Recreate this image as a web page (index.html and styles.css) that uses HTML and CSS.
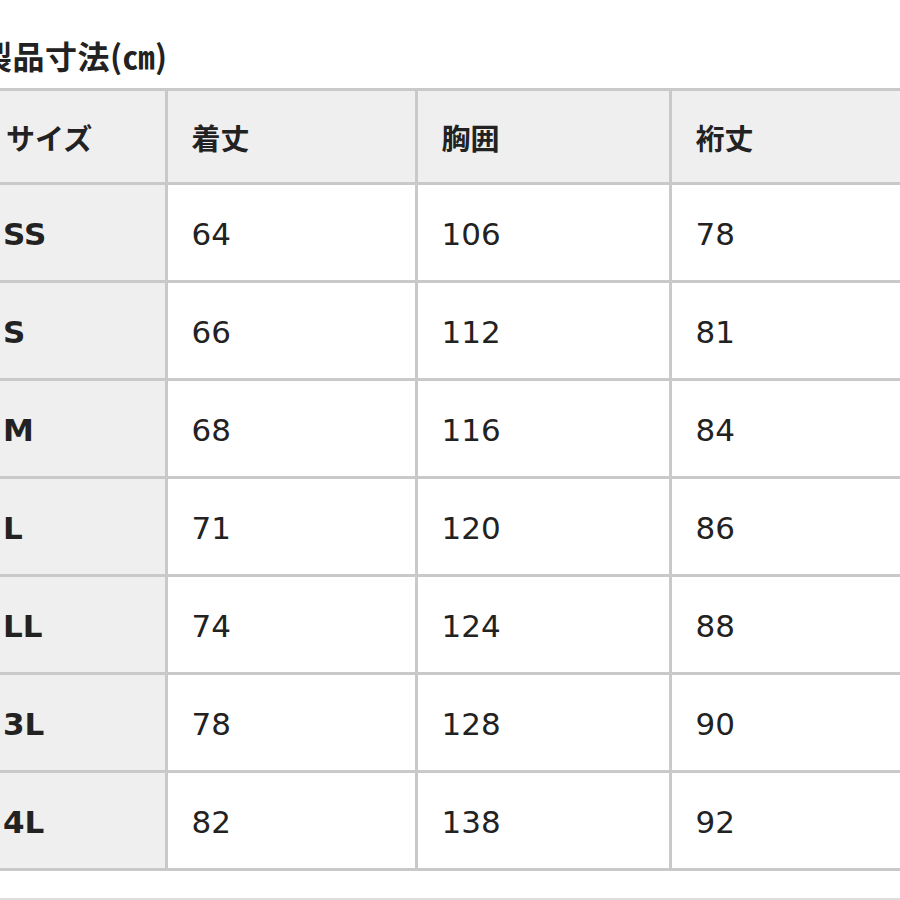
FILE: index.html
```html
<!DOCTYPE html>
<html lang="ja">
<head>
<meta charset="utf-8">
<title>製品寸法</title>
<link rel="stylesheet" href="styles.css">
</head>
<body>
<div class="page">
  <h2 class="title">製品寸法(㎝)</h2>
  <div class="size-table">
    <div class="cell head label">サイズ</div>
    <div class="cell head">着丈</div>
    <div class="cell head">胸囲</div>
    <div class="cell head">裄丈</div>

    <div class="cell label">SS</div>
    <div class="cell">64</div>
    <div class="cell">106</div>
    <div class="cell">78</div>

    <div class="cell label">S</div>
    <div class="cell">66</div>
    <div class="cell">112</div>
    <div class="cell">81</div>

    <div class="cell label">M</div>
    <div class="cell">68</div>
    <div class="cell">116</div>
    <div class="cell">84</div>

    <div class="cell label">L</div>
    <div class="cell">71</div>
    <div class="cell">120</div>
    <div class="cell">86</div>

    <div class="cell label">LL</div>
    <div class="cell">74</div>
    <div class="cell">124</div>
    <div class="cell">88</div>

    <div class="cell label">3L</div>
    <div class="cell">78</div>
    <div class="cell">128</div>
    <div class="cell">90</div>

    <div class="cell label">4L</div>
    <div class="cell">82</div>
    <div class="cell">138</div>
    <div class="cell">92</div>
  </div>
  <div class="separator"></div>
</div>
</body>
</html>
```

FILE: styles.css
```css
html, body {
  margin: 0;
  padding: 0;
  background: #ffffff;
  overflow: hidden;
}

.page {
  width: 900px;
  height: 900px;
  overflow: hidden;
  font-family: "DejaVu Sans", "Noto Sans CJK JP", sans-serif;
  color: #222222;
}

.title {
  margin: 0 0 13px -20px;
  padding-top: 35px;
  font-family: "Noto Sans CJK JP", sans-serif;
  font-size: 32px;
  font-weight: 700;
  line-height: 40px;
  letter-spacing: 0.5px;
  white-space: nowrap;
}

.size-table {
  display: grid;
  grid-template-columns: 184.5px 247px 251px 260px;
  grid-template-rows: 91px repeat(7, 95px);
  gap: 3px;
  padding: 3px;
  background: #c9c9c9;
  margin-left: -23px;
  width: max-content;
  margin-top: 0.5px;
}

.cell {
  background: #ffffff;
  display: flex;
  align-items: center;
  padding-left: 24px;
  padding-top: 3px;
  font-size: 31px;
  white-space: nowrap;
}

.head {
  background: #efefef;
  font-family: "Noto Sans CJK JP", sans-serif;
  font-size: 29px;
  font-weight: 700;
  padding-top: 1px;
}

.label {
  background: #efefef;
  font-weight: 700;
  padding-left: 23px;
}

.head.label {
  padding-left: 26px;
}

.separator {
  margin-top: 27px;
  border-top: 2px solid #dddddd;
}
```
